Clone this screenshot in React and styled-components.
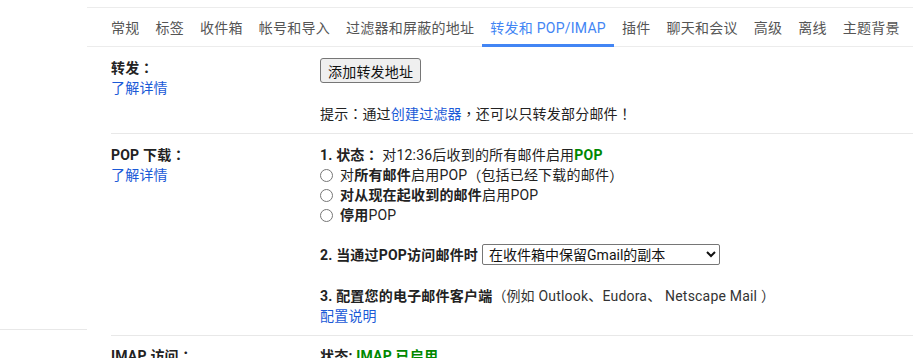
import React from 'react';
import styled, { createGlobalStyle } from 'styled-components';

const GlobalStyle = createGlobalStyle`
  html, body {
    margin: 0;
    padding: 0;
    background: #fff;
  }
  body {
    font-family: "Roboto", "Noto Sans CJK SC", "Noto Sans", sans-serif;
    font-size: 14px;
    color: #222;
    letter-spacing: 0.2px;
    text-spacing-trim: space-all;
  }
`;

const Page = styled.div`
  display: flex;
  width: 913px;
  height: 358px;
  overflow: hidden;
`;

const Sidebar = styled.div`
  width: 87px;
  flex: none;
`;

const SideRule = styled.div`
  margin-top: 329px;
  border-top: 1px solid #e8e8e8;
`;

const Main = styled.div`
  flex: 1;
  padding-top: 7px;
  min-width: 0;
`;

const TabBar = styled.div`
  display: flex;
  height: 38px;
  padding-left: 16px;
  border-top: 1px solid #ececec;
  border-bottom: 1px solid #ececec;
`;

const Tab = styled.div`
  display: flex;
  align-items: center;
  padding: 2px 8px 0;
  font-size: 14px;
  letter-spacing: 0.25px;
  white-space: nowrap;
  color: ${p => (p.$active ? '#4285f4' : '#555')};
  border-bottom: 3px solid ${p => (p.$active ? '#4285f4' : 'transparent')};
  margin-bottom: -1px;
`;

const Section = styled.div`
  display: grid;
  grid-template-columns: 209px 1fr;
  margin-left: 24px;
  padding: ${p => p.$pad || '10px 0 10px'};
  border-bottom: 1px solid #e8e8e8;
  line-height: 20px;
`;

const Label = styled.div`
  display: flex;
  flex-direction: column;
`;

const Title = styled.b`
  font-weight: 700;
`;

// full-width punctuation, glyph centred in a whole em cell like the reference font
const Punct = styled.span`
  display: inline-block;
  width: 1em;
  line-height: 1;
  text-align: center;
  font-family: "Noto Sans CJK TC", "Noto Sans CJK SC", sans-serif;
`;

const Link = styled.a`
  color: #1a5ad7;
  text-decoration: none;
  cursor: pointer;
`;

const Values = styled.div`
  display: flex;
  flex-direction: column;
  align-items: flex-start;
`;

const Button = styled.button`
  font-family: inherit;
  font-size: 14px;
  letter-spacing: 0.2px;
  height: 25px;
  padding: 0 7px;
  color: #111;
  background: #efefef;
  border: 1px solid #767676;
  border-radius: 3px;
  margin-bottom: 21px;
`;

const Green = styled.b`
  color: #080;
  font-weight: 700;
`;

const RadioRow = styled.label`
  display: flex;
  align-items: center;
  height: 20px;
`;

const Radio = styled.input`
  width: 13px;
  height: 13px;
  margin: 0 7px 0 0;
`;

const Step = styled.div`
  display: flex;
  align-items: center;
  margin-top: ${p => p.$gap || '0'};
`;

const Select = styled.select`
  font-family: inherit;
  font-size: 14px;
  color: #111;
  height: 21px;
  width: 238px;
  margin-left: 4px;
  padding: 0 2px;
  border: 1px solid #767676;
  border-radius: 2px;
  background: #fff;
`;

const Muted = styled.span`
  color: #333;
`;

const tabs = ['常规', '标签', '收件箱', '帐号和导入', '过滤器和屏蔽的地址', '转发和 POP/IMAP', '插件', '聊天和会议', '高级', '离线', '主题背景'];

export default function App() {
  return (
    <Page lang="zh-CN">
      <GlobalStyle />
      <Sidebar>
        <SideRule />
      </Sidebar>
      <Main>
        <TabBar>
          {tabs.map(t => (
            <Tab key={t} $active={t === '转发和 POP/IMAP'}>{t}</Tab>
          ))}
        </TabBar>

        <Section $pad="11px 0 9px">
          <Label>
            <Title>转发<Punct>：</Punct></Title>
            <Link>了解详情</Link>
          </Label>
          <Values>
            <Button>添加转发地址</Button>
            <div>提示<Punct>：</Punct>通过<Link>创建过滤器</Link><Punct>，</Punct>还可以只转发部分邮件<Punct>！</Punct></div>
          </Values>
        </Section>

        <Section $pad="11px 0 9px">
          <Label>
            <Title>POP 下载<Punct>：</Punct></Title>
            <Link>了解详情</Link>
          </Label>
          <Values>
            <div><Title>1. 状态<Punct>：</Punct></Title> 对12:36后收到的所有邮件启用<Green>POP</Green></div>
            <RadioRow><Radio type="radio" name="pop" />对<Title>所有邮件</Title>启用POP<Punct>（</Punct>包括已经下载的邮件<Punct>）</Punct></RadioRow>
            <RadioRow><Radio type="radio" name="pop" /><Title>对从现在起收到的邮件</Title>启用POP</RadioRow>
            <RadioRow><Radio type="radio" name="pop" /><Title>停用</Title>POP</RadioRow>
            <Step $gap="19px">
              <Title>2. 当通过POP访问邮件时</Title>
              <Select defaultValue="keep">
                <option value="keep">在收件箱中保留Gmail的副本</option>
              </Select>
            </Step>
            <Step $gap="21px">
              <Title>3. 配置您的电子邮件客户端</Title>
              <Muted><Punct>（</Punct>例如 Outlook、Eudora、 Netscape Mail <Punct>）</Punct></Muted>
            </Step>
            <Link>配置说明</Link>
          </Values>
        </Section>

        <Section $pad="10px 0 10px">
          <Label>
            <Title>IMAP 访问<Punct>：</Punct></Title>
          </Label>
          <Values>
            <div><Title>状态:</Title> <Green>IMAP 已启用</Green></div>
          </Values>
        </Section>
      </Main>
    </Page>
  );
}
